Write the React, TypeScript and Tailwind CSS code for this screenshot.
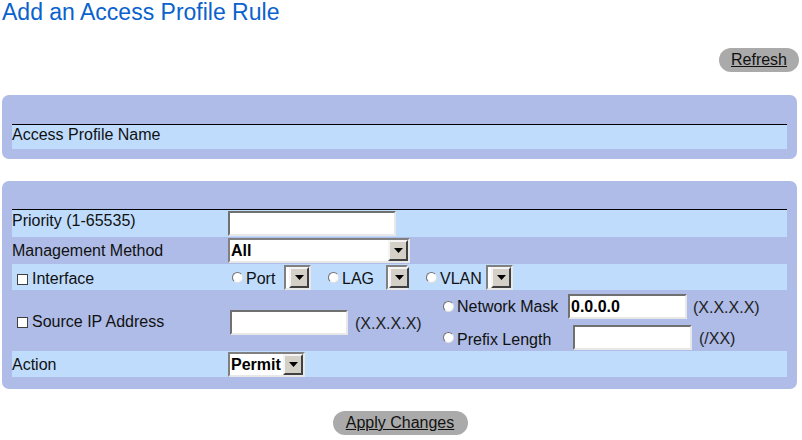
import React from "react";

const font = { fontFamily: '"Liberation Sans", Arial, sans-serif' };

function Arrow() {
  return (
    <span className="flex h-full w-[20px] shrink-0 items-center justify-center border-2 border-t-[#f4f4f4] border-l-[#f4f4f4] border-b-[#404040] border-r-[#404040] bg-[#d4d0c8]">
      <svg width="9" height="5" viewBox="0 0 9 5">
        <path d="M0 0h9L4.5 5z" fill="#000" />
      </svg>
    </span>
  );
}

function Select({ value, width }: { value?: string; width: string }) {
  return (
    <div
      className={`flex h-[25px] shrink-0 items-stretch border-2 border-t-[#808080] border-l-[#808080] border-b-[#e8e8e8] border-r-[#e8e8e8] bg-white ${width}`}
    >
      <span className="flex-1 pl-[1px] text-[16px] font-bold leading-[21px] text-black">{value}</span>
      <Arrow />
    </div>
  );
}

function Input({ value, className }: { value?: string; className: string }) {
  return (
    <div
      className={`h-[25px] shrink-0 border-2 border-t-[#707070] border-l-[#707070] border-b-[#e8e8e8] border-r-[#e8e8e8] bg-white pl-[1px] text-[16px] font-bold leading-[21px] text-black ${className}`}
    >
      {value}
    </div>
  );
}

function Radio() {
  return (
    <span className="mr-[3px] inline-block h-[11px] w-[11px] shrink-0 rounded-full border border-t-[#707070] border-l-[#707070] border-b-[#e0e0e0] border-r-[#e0e0e0] bg-white" />
  );
}

function Check() {
  return <span className="mr-[4px] inline-block h-[11px] w-[11px] shrink-0 border border-[#404040] bg-white" />;
}

const light = "bg-[#bfdcfd]";

export default function App() {
  return (
    <div className="h-[440px] w-[802px] bg-white text-[16px] text-[#111]" style={font}>
      <h1 className="pl-[2px] pt-[1px] text-[23px] leading-[23px] text-[#0a62cc]">Add an Access Profile Rule</h1>

      <div className="flex justify-end pr-[3px] pt-[24px]">
        <button className="h-[24px] w-[80px] rounded-full bg-[#aaaaaa] text-[16px] text-[#111] underline">Refresh</button>
      </div>

      {/* PROFILE NAME */}
      <div className="ml-[2px] mr-[5px] mt-[23px] h-[64px] rounded-[7px] bg-[#aebce7] px-[10px] pt-[29px]">
        <div className="border-t border-black" />
        <div className={`h-[24px] ${light} leading-[20px]`}>Access Profile Name</div>
      </div>

      {/* RULE */}
      <div className="ml-[2px] mr-[5px] mt-[22px] h-[208px] rounded-[7px] bg-[#aebce7] px-[10px] pt-[28px]">
        <div className="border-t border-black" />

        <div className={`flex h-[27px] items-center ${light}`}>
          <div className="w-[216px] shrink-0 self-start pt-[1px] leading-[19px]">Priority (1-65535)</div>
          <Input className="w-[168px]" />
        </div>

        <div className="flex h-[27px] items-center">
          <div className="w-[216px] shrink-0">Management Method</div>
          <Select value="All" width="w-[182px]" />
        </div>

        <div className={`flex h-[26px] items-center ${light}`}>
          <div className="flex w-[220px] shrink-0 items-center self-start pl-[5px] pt-[2px] leading-[26px]">
            <Check />
            Interface
          </div>
          <Radio />
          <span className="w-[38px] shrink-0 pt-[3px]">Port</span>
          <Select width="w-[27px]" />
          <span className="w-[17px] shrink-0" />
          <Radio />
          <span className="w-[44px] shrink-0 pt-[3px]">LAG</span>
          <Select width="w-[22px]" />
          <span className="w-[18px] shrink-0" />
          <Radio />
          <span className="w-[46px] shrink-0 pt-[3px]">VLAN</span>
          <Select width="w-[27px]" />
        </div>

        <div className="flex h-[61px] items-center pt-[3px]">
          <div className="flex w-[218px] shrink-0 items-center pl-[5px]">
            <Check />
            Source IP Address
          </div>
          <Input className="w-[118px]" />
          <span className="ml-[7px] mt-[3px] w-[88px] shrink-0 text-[#222]">(X.X.X.X)</span>
          <div className="flex flex-col gap-[4px]">
            <div className="flex items-center">
              <Radio />
              <span className="w-[111px] shrink-0 pt-[2px]">Network Mask</span>
              <Input value="0.0.0.0" className="w-[119px]" />
              <span className="ml-[6px] mt-[3px] text-[#222]">(X.X.X.X)</span>
            </div>
            <div className="flex items-center">
              <Radio />
              <span className="w-[116px] shrink-0 pt-[4px]">Prefix Length</span>
              <Input className="w-[119px]" />
              <span className="ml-[7px] mt-[3px] text-[#222]">(/XX)</span>
            </div>
          </div>
        </div>

        <div className={`flex h-[26px] items-center ${light}`}>
          <div className="w-[216px] shrink-0 pt-[1px]">Action</div>
          <Select value="Permit" width="w-[77px]" />
        </div>
      </div>

      <div className="flex justify-center pt-[22px]">
        <button className="-ml-[2px] h-[24px] w-[135px] rounded-full bg-[#aaaaaa] text-[16px] text-[#111] underline">
          Apply Changes
        </button>
      </div>
    </div>
  );
}
